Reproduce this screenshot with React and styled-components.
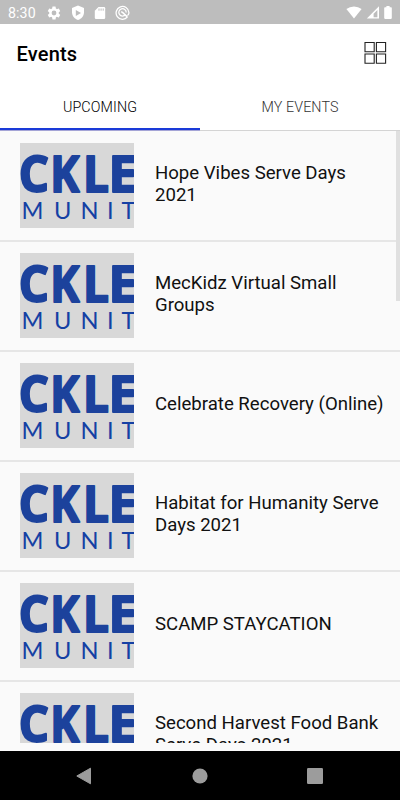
import React from 'react'
import styled, { createGlobalStyle } from 'styled-components';

const GlobalStyle = createGlobalStyle`
  * {
    box-sizing: border-box;
  }

  body {
    margin: 0;
    background: #fafafa;
    font-family: Roboto, 'Liberation Sans', sans-serif;
  }
`;

const Screen = styled.div`
  display: flex;
  flex-direction: column;
  width: 400px;
  height: 800px;
  overflow: hidden;
  background: #fafafa;
`;

const StatusBar = styled.div`
  display: flex;
  flex: none;
  align-items: center;
  justify-content: space-between;
  height: 24px;
  padding: 1px 8px 0 8px;
  background: #bdbdbd;
  color: #fff;
`;

const StatusGroup = styled.div`
  display: flex;
  align-items: center;
  gap: ${(props) => props.$gap || 0}px;
`;

const Clock = styled.span`
  width: 29.4px;
  font-size: 14.2px;
  letter-spacing: 0.1px;
`;

const Header = styled.header`
  display: flex;
  flex: none;
  align-items: center;
  justify-content: space-between;
  height: 59px;
  padding: 0 13px 0 16.5px;
  background: #fff;
`;

const Title = styled.h1`
  margin: 1px 0 0;
  font-size: 20px;
  font-weight: 500;
  line-height: 24px;
  letter-spacing: 0.2px;
  color: #000;
`;

const Tabs = styled.nav`
  display: flex;
  flex: none;
  height: 47px;
  background: #fff;
`;

const Tab = styled.button`
  flex: 1;
  padding: 2px 0 0;
  border: 0;
  border-bottom: 2px solid ${(props) => (props.$active ? '#1a3ad8' : '#fff')};
  background: none;
  font-family: inherit;
  font-size: 14.3px;
  font-weight: 300;
  letter-spacing: 0.1px;
  color: ${(props) => (props.$active ? '#000' : '#333')};
`;

const TabShadow = styled.div`
  flex: none;
  height: 1px;
  background: linear-gradient(to right, #a4a4d6 50%, #d4d4d4 50%);
`;

const ListArea = styled.main`
  display: flex;
  flex: none;
  height: 612px;
  overflow: hidden;
`;

const EventList = styled.ul`
  width: 396px;
  margin: 0;
  padding: 1px 0 0;
  list-style: none;
`;

const ScrollThumb = styled.div`
  width: 4px;
  height: 170px;
  background: #e0e0e0;
`;

const EventRow = styled.li`
  display: flex;
  align-items: center;
  height: 110px;
  padding: 0 0 1px 20.4px;
  border-bottom: 2px solid #e6e6e6;
  margin-right: -4px;
`;

const EventName = styled.span`
  width: 236px;
  margin: -2px 0 0 20.6px;
  font-size: 18.6px;
  line-height: 21.7px;
  color: #111;
`;

const NavBar = styled.footer`
  display: flex;
  flex: none;
  align-items: center;
  justify-content: space-between;
  height: 49px;
  margin-top: auto;
  padding: 0 77px 0 76px;
  background: #000;
`;

const EventLogo = () => (
  <svg width="114" height="85" viewBox="0 0 114 85">
    <rect width="114" height="85" fill="#d8d8d8" />
    <g fill="#1c429c" stroke="#1c429c" strokeWidth="2" strokeLinejoin="round" fontFamily="'Open Sans', sans-serif" fontWeight="700" fontSize="50">
      <text transform="translate(-1.2 49) scale(0.95 1)">C</text>
      <text transform="translate(30.3 49) scale(0.88 1)">K</text>
      <text transform="translate(62.9 49) scale(0.92 1)">L</text>
      <text transform="translate(88.4 49) scale(1.02 1)">E</text>
    </g>
    <text y="76.2" x="1.4 34 60.4 86.9 101.6" fill="#1440a4" fontFamily="Lato, sans-serif" fontSize="23.6">MUNIT</text>
  </svg>
);

const GearIcon = () => (
  <svg width="16" height="16" viewBox="0 0 24 24" fill="currentColor">
    <path d="M19.14 12.94c.04-.3.06-.61.06-.94 0-.32-.02-.64-.07-.94l2.03-1.58a.49.49 0 0 0 .12-.61l-1.92-3.32a.49.49 0 0 0-.59-.22l-2.39.96c-.5-.38-1.03-.7-1.62-.94l-.36-2.54a.48.48 0 0 0-.48-.41h-3.84a.47.47 0 0 0-.47.41l-.36 2.54c-.59.24-1.13.57-1.62.94l-2.39-.96a.48.48 0 0 0-.59.22L2.74 8.87a.47.47 0 0 0 .12.61l2.03 1.58c-.05.3-.09.63-.09.94s.02.64.07.94l-2.03 1.58a.49.49 0 0 0-.12.61l1.92 3.32c.12.22.37.29.59.22l2.39-.96c.5.38 1.03.7 1.62.94l.36 2.54c.05.24.24.41.48.41h3.84c.24 0 .44-.17.47-.41l.36-2.54c.59-.24 1.13-.56 1.62-.94l2.39.96c.22.08.47 0 .59-.22l1.92-3.32a.47.47 0 0 0-.12-.61zM12 15.6A3.6 3.6 0 1 1 12 8.4a3.6 3.6 0 0 1 0 7.2z" />
  </svg>
);

const ShieldIcon = () => (
  <svg width="14" height="16" viewBox="0 0 14 16">
    <path d="M7 .6L13 3v4.3c0 3.6-2.4 6.5-6 7.8-3.6-1.3-6-4.2-6-7.8V3z" fill="currentColor" />
    <path d="M4.8 5l5.2 3-5.2 3z" fill="#bdbdbd" />
  </svg>
);

const SdCardIcon = () => (
  <svg width="12" height="14" viewBox="0 0 12 14">
    <path d="M4.5 1H10a1.2 1.2 0 0 1 1.2 1.2v9.6A1.2 1.2 0 0 1 10 13H2a1.2 1.2 0 0 1-1.2-1.2V4.7z" fill="currentColor" />
    <path d="M5 2.5v2.2M7.1 2.5v2.2M9.2 2.5v2.2" stroke="#bdbdbd" strokeWidth="1" />
  </svg>
);

const RadarIcon = () => (
  <svg width="15" height="15" viewBox="0 0 15 15" fill="none" stroke="currentColor">
    <path d="M12.5 11.9A6.4 6.4 0 1 1 13.9 7.5c0 1.7-.6 2.7-1.7 2.6" strokeWidth="1.3" />
    <path d="M10.4 9.7A3.7 3.7 0 1 1 11.2 7.5" strokeWidth="1.3" />
    <path d="M6.2 6.6l1.6 1 4.5 4.3" strokeWidth="1.5" />
  </svg>
);

const WifiIcon = () => (
  <svg width="16" height="13" viewBox="0 0 16 13" fill="currentColor">
    <path d="M8 12.5L.4 3.1a12.2 12.2 0 0 1 15.2 0z" />
  </svg>
);

const SignalIcon = () => (
  <svg width="14" height="13" viewBox="0 0 14 13">
    <path d="M13 .3v12.2H.8z" fill="currentColor" />
    <path d="M11.4 4v7.2H7.6V7.8z" fill="#bdbdbd" />
  </svg>
);

const BatteryIcon = () => (
  <svg width="8" height="13" viewBox="0 0 8 13" fill="currentColor">
    <path d="M2.4 0h3.2v1.3H7a.8.8 0 0 1 .8.8v10a.8.8 0 0 1-.8.8H1a.8.8 0 0 1-.8-.8v-10a.8.8 0 0 1 .8-.8h1.4z" />
  </svg>
);

const GridIcon = () => (
  <svg width="24" height="24" viewBox="0 0 24 24" fill="none" stroke="#222" strokeWidth="1.1">
    <path d="M2 .5h9.2v9.2H2zM13.4 .5h9.2v9.2h-9.2zM2 12h9.2v9.2H2zM13.4 12h9.2v9.2h-9.2z" />
  </svg>
);

const BackIcon = () => (
  <svg width="16" height="18" viewBox="0 0 16 18">
    <path d="M14.5 1.2v15.6L.8 9z" fill="#9c9c9c" stroke="#9c9c9c" strokeLinejoin="round" />
  </svg>
);

const HomeIcon = () => (
  <svg width="16" height="16" viewBox="0 0 16 16">
    <circle cx="8" cy="8" r="7.6" fill="#9c9c9c" />
  </svg>
);

const RecentsIcon = () => (
  <svg width="16" height="16" viewBox="0 0 16 16">
    <rect width="16" height="16" rx="1.2" fill="#9c9c9c" />
  </svg>
);

const events = [
  'Hope Vibes Serve Days 2021',
  'MecKidz Virtual Small Groups',
  'Celebrate Recovery (Online)',
  'Habitat for Humanity Serve Days 2021',
  'SCAMP STAYCATION',
  'Second Harvest Food Bank Serve Days 2021',
];

const App = () => {

  // Selected tab
  const [tab, setTab] = React.useState('upcoming');

  return (
    <Screen>
      <GlobalStyle />
      <StatusBar>
        <StatusGroup $gap={8.9}>
          <Clock>8:30</Clock>
          <GearIcon />
          <ShieldIcon />
          <SdCardIcon />
          <RadarIcon />
        </StatusGroup>
        <StatusGroup $gap={4}>
          <WifiIcon />
          <SignalIcon />
          <BatteryIcon />
        </StatusGroup>
      </StatusBar>
      <Header>
        <Title>Events</Title>
        <GridIcon />
      </Header>
      <Tabs>
        <Tab $active={tab === 'upcoming'} onClick={() => setTab('upcoming')}>UPCOMING</Tab>
        <Tab $active={tab === 'mine'} onClick={() => setTab('mine')}>MY EVENTS</Tab>
      </Tabs>
      <TabShadow />
      <ListArea>
        <EventList>
          {events.map((name) => (
            <EventRow key={name}>
              <EventLogo />
              <EventName>{name}</EventName>
            </EventRow>
          ))}
        </EventList>
        <ScrollThumb />
      </ListArea>
      <NavBar>
        <BackIcon />
        <HomeIcon />
        <RecentsIcon />
      </NavBar>
    </Screen>
  )
};

export default App
